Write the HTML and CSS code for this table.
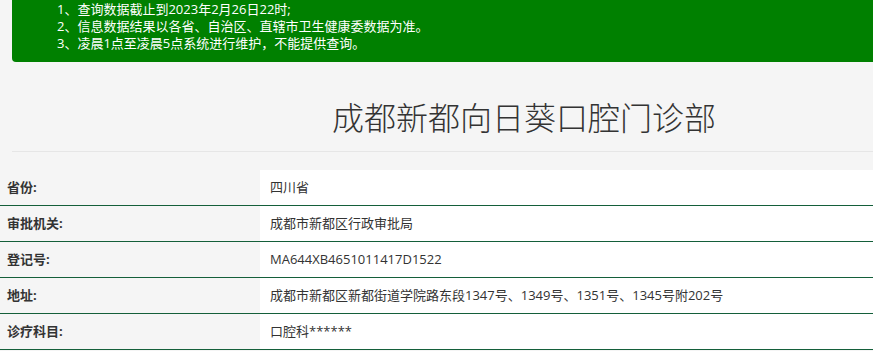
FILE: index.html
```html
<!DOCTYPE html>
<html lang="zh-CN">
<head>
<meta charset="utf-8">
<title>成都新都向日葵口腔门诊部</title>
<link rel="stylesheet" href="styles.css">
</head>
<body>
<div class="wrap">
  <div class="notice">
    <p>1、查询数据截止到2023年2月26日22时;</p>
    <p>2、信息数据结果以各省、自治区、直辖市卫生健康委数据为准。</p>
    <p>3、凌晨1点至凌晨5点系统进行维护，不能提供查询。</p>
  </div>
  <div class="title-box">
    <h1 class="title">成都新都向日葵口腔门诊部</h1>
  </div>
</div>
<div class="info">
  <div class="row"><div class="label">省份:</div><div class="value">四川省</div></div>
  <div class="row"><div class="label">审批机关:</div><div class="value">成都市新都区行政审批局</div></div>
  <div class="row"><div class="label">登记号:</div><div class="value">MA644XB4651011417D1522</div></div>
  <div class="row"><div class="label">地址:</div><div class="value">成都市新都区新都街道学院路东段1347号、1349号、1351号、1345号附202号</div></div>
  <div class="row"><div class="label">诊疗科目:</div><div class="value">口腔科******</div></div>
</div>
</body>
</html>
```
FILE: styles.css
```css
html, body {
  margin: 0;
  padding: 0;
  overflow: hidden;
  background: #f5f5f5;
  font-family: "Open Sans", "Noto Sans CJK SC", sans-serif;
  color: #333;
}

.wrap {
  width: 1024px;
  margin-left: 12px;
}

.notice {
  background: #008000;
  color: #fff;
  font-size: 13px;
  line-height: 17px;
  padding: 1px 0 10px 45px;
  border-radius: 0 0 4px 4px;
}

.notice p {
  margin: 0;
}

.title-box {
  border-bottom: 1px solid #e6e6e6;
  padding: 36px 0 13px;
}

.title {
  margin: 0;
  text-align: center;
  font-size: 32px;
  line-height: 40px;
  font-weight: 300;
  color: #333;
}

.info {
  margin-top: 18px;
  width: 100%;
}

.row {
  display: grid;
  grid-template-columns: 260px 1fr;
  border-bottom: 1px solid #145f3a;
}

.label {
  padding-left: 7px;
  font-size: 13px;
  font-weight: bold;
  line-height: 35px;
  color: #333;
}

.value {
  background: #fff;
  padding-left: 10px;
  font-size: 13px;
  line-height: 35px;
  color: #333;
}
```
